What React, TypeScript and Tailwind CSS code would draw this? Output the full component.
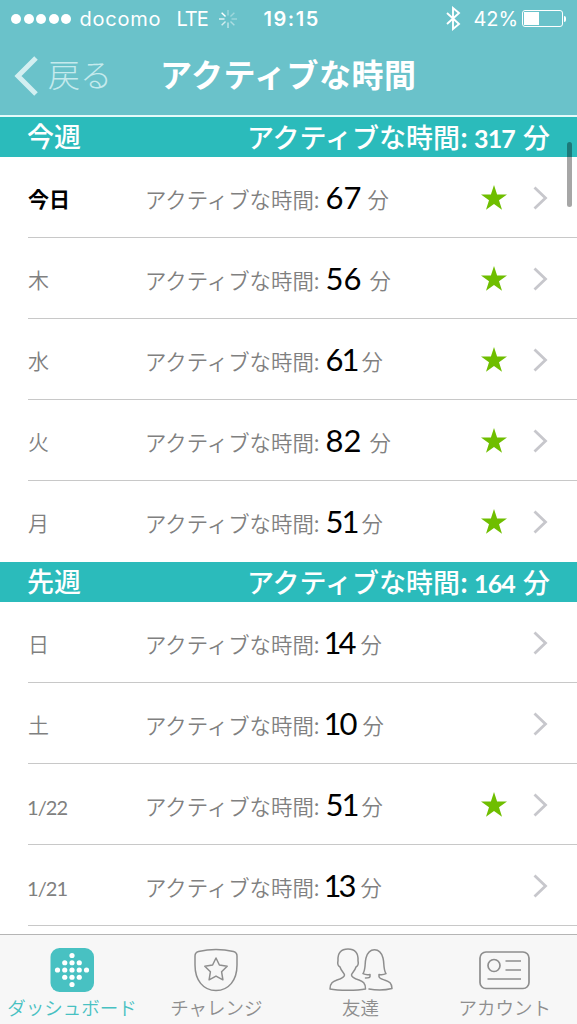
import React from 'react';

interface Day {
  label: string;
  minutes: string;
  goal: boolean;
  today?: boolean;
  fit?: string; // tightens the digits around a narrow "1"
}

const thisWeek: Day[] = [
  { label: '今日', minutes: '67', goal: true, today: true, fit: 'ml-[6px] mr-[-2px]' },
  { label: '木', minutes: '56', goal: true, fit: 'ml-[6px]' },
  { label: '水', minutes: '61', goal: true, fit: 'ml-[6px] tracking-[-2px] mr-[-4px]' },
  { label: '火', minutes: '82', goal: true, fit: 'ml-[6px]' },
  { label: '月', minutes: '51', goal: true, fit: 'ml-[6px] tracking-[-2px] mr-[-4px]' },
];

const lastWeek: Day[] = [
  { label: '日', minutes: '14', goal: false, fit: 'ml-[4px] tracking-[-3px] mr-[-1px]' },
  { label: '土', minutes: '10', goal: false, fit: 'ml-[4px] tracking-[-2px] mr-[-1px]' },
  { label: '1/22', minutes: '51', goal: true, fit: 'ml-[6px] tracking-[-2px] mr-[-4px]' },
  { label: '1/21', minutes: '13', goal: false, fit: 'ml-[4px] tracking-[-3px] mr-[-1px]' },
];

const StatusBar: React.FC = () => (
  <div className="flex h-[37px] items-center font-['Inter','Noto_Sans_CJK_JP',sans-serif] text-[20px] text-white">
    <div className="ml-[11px] flex gap-[2.6px]">
      {[0, 1, 2, 3, 4].map((i) => (
        <span key={i} className="size-[10px] rounded-full bg-white" />
      ))}
    </div>
    <span className="ml-[8px] w-[97px] text-[20px] font-normal tracking-[0.8px]">docomo</span>
    <span className="w-[43px] font-normal tracking-[-1px]">LTE</span>
    <svg className="size-[18px]" viewBox="0 0 18 18" stroke="white" strokeWidth="1.4">
      {[0.35, 0.35, 0.35, 0.45, 0.6, 0.7, 0.85, 1].map((o, i) => (
        <path key={i} d="M9 0v5.500" opacity={o} transform={`rotate(${i * 45} 9 9)`} />
      ))}
    </svg>
    <span className="ml-[26px] w-[183px] font-semibold tracking-[1.6px]">19:15</span>
    <svg className="h-[25px] w-[15px]" viewBox="0 0 15 25" fill="none" stroke="white" strokeWidth="1.9">
      <path d="M1 7l12 11-6 5V2l6 5L1 18" />
    </svg>
    <span className="ml-[12px] w-[49px] font-normal">42%</span>
    <div className="h-[17px] w-[41px] rounded-[3px] border border-white p-px">
      <div className="h-full w-[15px] bg-white" />
    </div>
    <div className="ml-px h-[6px] w-[2px] rounded-r-full bg-white" />
  </div>
);

const NavBar: React.FC = () => (
  <div className="flex h-[78px] items-start text-white">
    <svg className="mt-[19px] ml-[14px] h-[40px] w-[25px]" viewBox="0 0 25 40" fill="none" stroke="#d3eff1" strokeWidth="5">
      <path d="M22 2L4 20l18 18" />
    </svg>
    <span className="ml-[9px] w-[113px] pt-[13px] text-[32px] leading-[46px] font-light text-[#c5eaed]">戻る</span>
    <h1 className="ml-[-1px] pt-[13px] text-[32px] leading-[46px] font-bold tracking-[0.5px]">アクティブな時間</h1>
  </div>
);

const WeekHeader: React.FC<{ title: string; total: string }> = ({ title, total }) => (
  <div className="flex h-[40px] items-center justify-between bg-[#2bbbbb] px-[27px] text-[27px] leading-[40px] font-medium text-white">
    <span className="mt-[-2px]">{title}</span>
    <span className="whitespace-pre">
      アクティブな時間: <span className="font-['Lato','Noto_Sans_CJK_JP',sans-serif] text-[25px] font-bold tracking-[-0.9px]">{total}</span>
      <span className="ml-[2px]"> 分</span>
    </span>
  </div>
);

const DayRow: React.FC<{ day: Day; line: boolean }> = ({ day, line }) => (
  <div className="h-[81px] pl-[28px]">
    <div className={`flex h-full items-center border-b pt-[2px] ${line ? 'border-[#c8c8c8]' : 'border-transparent'}`}>
      <span className={`w-[117px] text-[#808080] ${day.label.includes('/') ? "-ml-px mr-px pt-[4px] font-['Lato','Noto_Sans_CJK_JP',sans-serif] text-[20px] font-normal tracking-[-0.9px]" : 'pt-[2px] text-[21px]'} ${day.today ? 'font-bold text-black' : 'font-[350]'}`}>
        {day.label}
      </span>
      <div className="mt-[-1px] flex w-[336px] items-baseline text-[21.4px] font-[350] text-[#808080]">
        <span className="relative top-[-1px]">アクティブな時間:</span>
        <span className={`font-['Lato','Noto_Sans_CJK_JP',sans-serif] text-[31px] font-normal text-black ${day.fit ?? ''}`}>
          {day.minutes}
        </span>
        <span className="relative top-[-1px] ml-[8px]">分</span>
      </div>
      <div className="w-[52px]">
        {day.goal && (
          <svg className="mt-[-1px] h-[25px] w-[26px]" viewBox="0 0 26 25" fill="#6fbe00">
            <path d="M13 0l3.1 9.5H26l-8 5.8 3 9.5-8-5.8-8 5.8 3-9.5-8-5.8h9.900z" />
          </svg>
        )}
      </div>
      <svg className="h-[24px] w-[15px]" viewBox="0 0 15 24" fill="none" stroke="#c7c7cc" strokeWidth="2.8">
        <path d="M1.5 1.5L12.5 12l-11 10.5" />
      </svg>
    </div>
  </div>
);

const DashboardIcon: React.FC = () => (
  <svg className="h-[44px] w-[64px]" viewBox="0 0 64 44">
    <rect x="10.5" y="0" width="43.5" height="44" rx="9" fill="#48c1c2" />
    <g fill="white">
      {[[0, -2], [-1, -1], [0, -1], [1, -1], [-2, 0], [-1, 0], [0, 0], [1, 0], [2, 0], [-1, 1], [0, 1], [1, 1], [0, 2]].map(([x, y]) => (
        <circle key={`${x},${y}`} cx={32 + x * 7.25} cy={22 + y * 7.25} r="2.6" />
      ))}
    </g>
  </svg>
);

const ChallengeIcon: React.FC = () => (
  <svg className="h-[44px] w-[64px]" viewBox="0 0 64 44" fill="none" stroke="#8e8e8e" strokeWidth="1.5" strokeLinejoin="round">
    <path d="M14.500 3.500C25 1 39 1 49.500 3.500q3.500 1 3.500 4.500v9c0 15-8 25.500-21 25.500S11 32 11 17V8q0-3.500 3.500-4.500z" />
    <path d="M32 10l3.400 7 7.800 1.200-5.600 5.600 1.300 8-6.900-3.700-6.900 3.700 1.300-8-5.600-5.600 7.800-1.200z" />
  </svg>
);

const FriendsIcon: React.FC = () => (
  <svg className="h-[44px] w-[64px]" viewBox="0 0 64 44" fill="none" stroke="#8e8e8e" strokeWidth="1.5" strokeLinejoin="round" strokeLinecap="round">
    <path d="M1 41c0-6 3-7.500 7-9 4-1.300 7.500-2.500 7.500-5 0-2-3-3-4.500-8-2-1-2.500-4-2-6.500C8.500 5 12 1 19 1s10.500 4 10 11.500c.5 2.500 0 5.500-2 6.500-1.500 5-4.500 6-4.500 8 0 2.500 3.500 3.700 7.500 5 4 1.500 6.500 3 6.500 9-8 1.800-27.500 1.800-35.500 0z" />
    <path d="M36.500 30q4.500 0 4.500-1.500v-2c-2.500.5-5 .2-7-.8 3-5 1.500-10 3-15.700 1.500-5.500 4.500-8.200 8.500-8.200s7 2.700 8.500 8.200c1.500 5.700 0 10.700 3 15.700-2 1-4.500 1.300-7 .8v2c0 2 2.500 2.500 5.500 3.500 5 1.500 7.300 3.200 7.500 8.500-6 1.500-16 1.800-23 .5" />
  </svg>
);

const AccountIcon: React.FC = () => (
  <svg className="h-[44px] w-[64px]" viewBox="0 0 64 44" fill="none" stroke="#8e8e8e" strokeWidth="1.7">
    <rect x="7" y="4" width="49" height="36.500" rx="6" />
    <circle cx="21" cy="17.500" r="6" />
    <path d="M32.500 13H48M32.500 22H48M14.500 31H48" />
  </svg>
);

const tabs = [
  { label: 'ダッシュボード', icon: <DashboardIcon />, active: true },
  { label: 'チャレンジ', icon: <ChallengeIcon />, active: false },
  { label: '友達', icon: <FriendsIcon />, active: false },
  { label: 'アカウント', icon: <AccountIcon />, active: false },
];

const App: React.FC = () => {
  return (
    <div className="relative flex h-[1024px] w-[577px] flex-col overflow-hidden bg-white font-['Noto_Sans_CJK_JP',sans-serif]">
      <header className="h-[115px] shrink-0 bg-[#6ac2ca]">
        <StatusBar />
        <NavBar />
      </header>
      <main className="h-[819px] shrink-0 overflow-hidden border-t-2 border-[#e4fafa]">
        <WeekHeader title="今週" total="317" />
        {thisWeek.map((day, i) => (
          <DayRow key={day.label} day={day} line={i < thisWeek.length - 1} />
        ))}
        <WeekHeader title="先週" total="164" />
        {lastWeek.map((day) => (
          <DayRow key={day.label} day={day} line />
        ))}
      </main>
      <nav className="grid h-[90px] grid-cols-4 border-t border-[#b5b5b5] bg-[#f7f7f7]">
        {tabs.map((tab) => (
          <div key={tab.label} className="flex flex-col items-center pt-[13px]">
            {tab.icon}
            <span className={`mt-[1px] text-[18.500px] leading-[28px] font-[350] whitespace-nowrap ${tab.active ? 'text-[#48c1c2]' : 'text-[#8e8e8e]'}`}>
              {tab.label}
            </span>
          </div>
        ))}
      </nav>
      {/* scroll indicator */}
      <div className="absolute top-[142px] right-[5px] h-[65px] w-[5px] rounded-full bg-black/35" />
    </div>
  );
};

export default App;
